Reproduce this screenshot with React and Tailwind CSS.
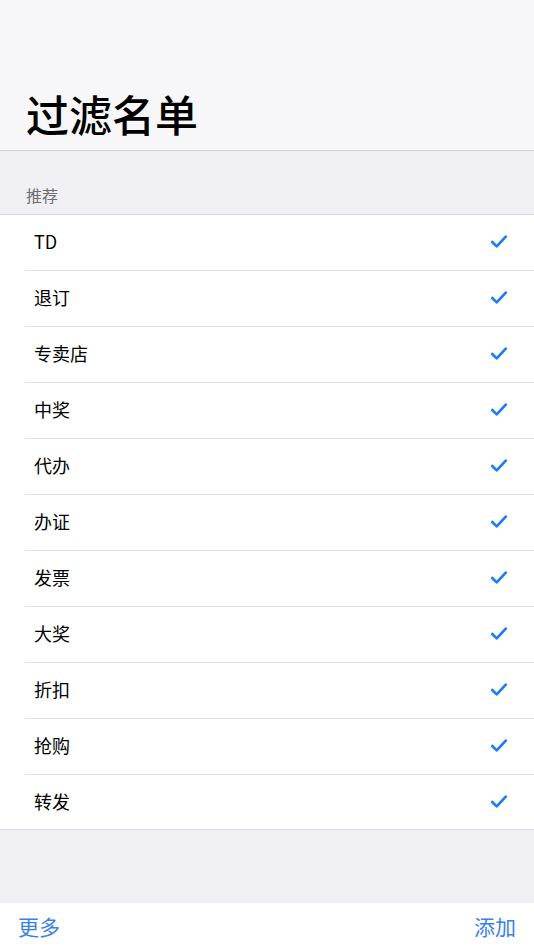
const items = ["TD", "退订", "专卖店", "中奖", "代办", "办证", "发票", "大奖", "折扣", "抢购", "转发"];

const Check = () => (
  <svg width="18" height="15" viewBox="0 0 18 15" fill="none">
    <path d="M2.2 8 L6.7 12.4 L15.8 2.6" stroke="#1f7cf2" strokeWidth="2.7" strokeLinecap="round" strokeLinejoin="round" />
  </svg>
);

export default function App() {
  return (
    <div
      className="w-[534px] h-[950px] flex flex-col bg-[#efeff4] overflow-hidden"
      style={{ fontFamily: '"Noto Sans CJK SC", "Noto Sans", sans-serif' }}
    >
      {/* header */}
      <div className="h-[151px] shrink-0 bg-[#f7f7f9] border-b border-[#d6d6da] flex items-end pl-[26px] pb-[9px]">
        <h1 className="text-[43px] leading-[56px] font-medium text-black">过滤名单</h1>
      </div>

      {/* section title */}
      <div className="h-[63px] shrink-0 flex items-end pl-[26px] pb-[8px]">
        <span className="text-[16px] leading-[22px] text-[#6d6d72]">推荐</span>
      </div>

      {/* list */}
      <div className="shrink-0 bg-white border-y border-[#dcdce0]">
        {items.map((item, i) => (
          <div key={item} className="pl-[25px]">
            <div
              className={
                i < items.length - 1
                  ? "h-[56px] flex items-center justify-between pl-[9px] pr-[26px] pb-[2px] border-b border-[#e3e3e6]"
                  : "h-[54px] flex items-center justify-between pl-[9px] pr-[26px] pb-[1px]"
              }
            >
              <span className="text-[18px] text-black">{item}</span>
              <Check />
            </div>
          </div>
        ))}
      </div>

      <div className="flex-1" />

      {/* toolbar */}
      <div className="h-[47px] shrink-0 bg-white flex items-center justify-between px-[18px]">
        <span className="text-[21px] text-[#3a82e8]">更多</span>
        <span className="text-[21px] text-[#3a82e8]">添加</span>
      </div>
    </div>
  );
}
